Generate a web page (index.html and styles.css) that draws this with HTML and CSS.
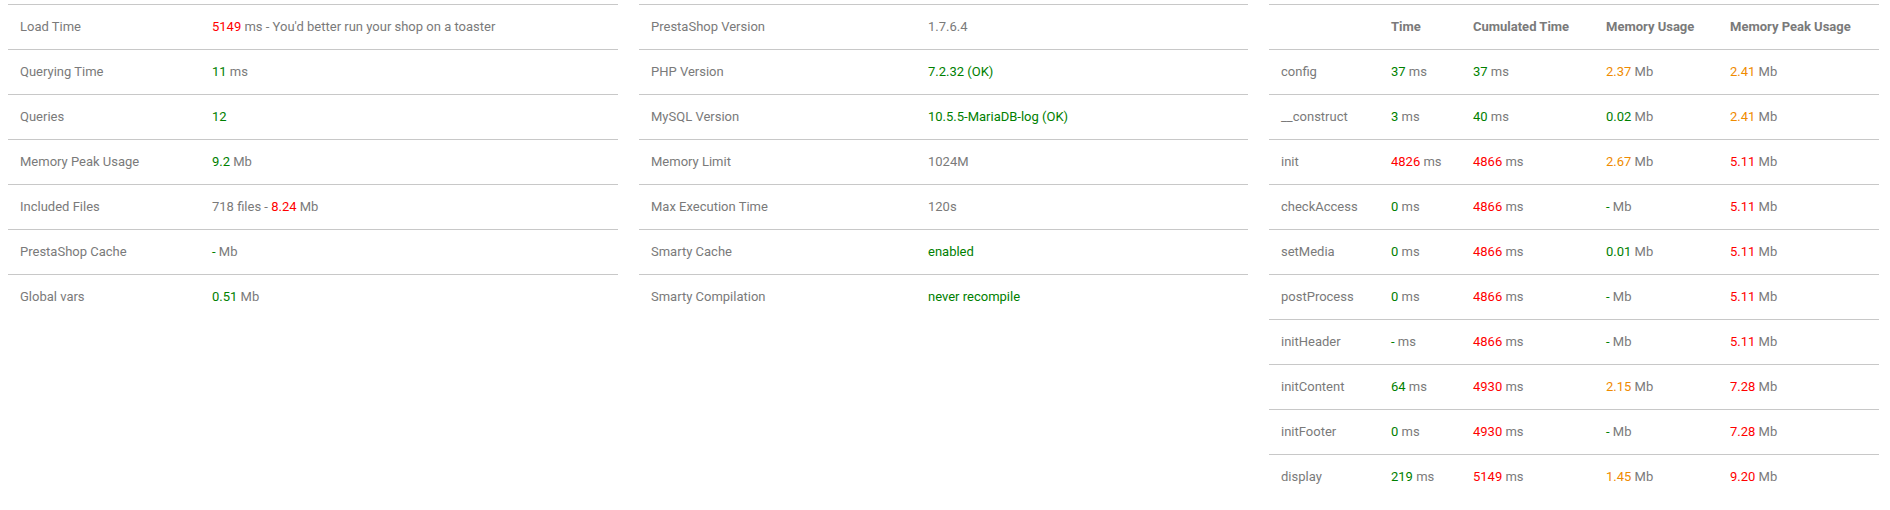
FILE: index.html
```html
<!DOCTYPE html>
<html>
<head>
<meta charset="utf-8">
<link rel="stylesheet" href="styles.css">
</head>
<body>
<div class="profiling">
  <table class="ptable t1">
    <colgroup><col class="c1a"><col></colgroup>
    <tbody>
      <tr><td>Load Time</td><td><span class="bad">5149</span> ms - You'd better run your shop on a toaster</td></tr>
      <tr><td>Querying Time</td><td><span class="ok">11</span> ms</td></tr>
      <tr><td>Queries</td><td><span class="ok">12</span></td></tr>
      <tr><td>Memory Peak Usage</td><td><span class="ok">9.2</span> Mb</td></tr>
      <tr><td>Included Files</td><td>718 files - <span class="bad">8.24</span> Mb</td></tr>
      <tr><td>PrestaShop Cache</td><td><span class="ok">-</span> Mb</td></tr>
      <tr><td>Global vars</td><td><span class="ok">0.51</span> Mb</td></tr>
    </tbody>
  </table>
  <table class="ptable t2">
    <colgroup><col class="c2a"><col></colgroup>
    <tbody>
      <tr><td>PrestaShop Version</td><td>1.7.6.4</td></tr>
      <tr><td>PHP Version</td><td><span class="ok">7.2.32 (OK)</span></td></tr>
      <tr><td>MySQL Version</td><td><span class="ok">10.5.5-MariaDB-log (OK)</span></td></tr>
      <tr><td>Memory Limit</td><td>1024M</td></tr>
      <tr><td>Max Execution Time</td><td>120s</td></tr>
      <tr><td>Smarty Cache</td><td><span class="ok">enabled</span></td></tr>
      <tr><td>Smarty Compilation</td><td><span class="ok">never recompile</span></td></tr>
    </tbody>
  </table>
  <table class="ptable t3">
    <colgroup><col class="c3a"><col class="c3b"><col class="c3c"><col class="c3d"><col></colgroup>
    <thead>
      <tr><th></th><th>Time</th><th>Cumulated Time</th><th>Memory Usage</th><th>Memory Peak Usage</th></tr>
    </thead>
    <tbody>
      <tr><td>config</td><td><span class="ok">37</span> ms</td><td><span class="ok">37</span> ms</td><td><span class="warn">2.37</span> Mb</td><td><span class="warn">2.41</span> Mb</td></tr>
      <tr><td>__construct</td><td><span class="ok">3</span> ms</td><td><span class="ok">40</span> ms</td><td><span class="ok">0.02</span> Mb</td><td><span class="warn">2.41</span> Mb</td></tr>
      <tr><td>init</td><td><span class="bad">4826</span> ms</td><td><span class="bad">4866</span> ms</td><td><span class="warn">2.67</span> Mb</td><td><span class="bad">5.11</span> Mb</td></tr>
      <tr><td>checkAccess</td><td><span class="ok">0</span> ms</td><td><span class="bad">4866</span> ms</td><td><span class="ok">-</span> Mb</td><td><span class="bad">5.11</span> Mb</td></tr>
      <tr><td>setMedia</td><td><span class="ok">0</span> ms</td><td><span class="bad">4866</span> ms</td><td><span class="ok">0.01</span> Mb</td><td><span class="bad">5.11</span> Mb</td></tr>
      <tr><td>postProcess</td><td><span class="ok">0</span> ms</td><td><span class="bad">4866</span> ms</td><td><span class="ok">-</span> Mb</td><td><span class="bad">5.11</span> Mb</td></tr>
      <tr><td>initHeader</td><td><span class="ok">-</span> ms</td><td><span class="bad">4866</span> ms</td><td><span class="ok">-</span> Mb</td><td><span class="bad">5.11</span> Mb</td></tr>
      <tr><td>initContent</td><td><span class="ok">64</span> ms</td><td><span class="bad">4930</span> ms</td><td><span class="warn">2.15</span> Mb</td><td><span class="bad">7.28</span> Mb</td></tr>
      <tr><td>initFooter</td><td><span class="ok">0</span> ms</td><td><span class="bad">4930</span> ms</td><td><span class="ok">-</span> Mb</td><td><span class="bad">7.28</span> Mb</td></tr>
      <tr><td>display</td><td><span class="ok">219</span> ms</td><td><span class="bad">5149</span> ms</td><td><span class="warn">1.45</span> Mb</td><td><span class="bad">9.20</span> Mb</td></tr>
    </tbody>
  </table>
</div>
</body>
</html>
```
FILE: styles.css
```css
html, body {
  margin: 0;
  padding: 0;
  background: #ffffff;
}
body {
  font-family: Roboto, "Liberation Sans", sans-serif;
  font-size: 13px;
  color: #7a7a7a;
}
.profiling {
  display: grid;
  grid-template-columns: 610px 609px 610px;
  column-gap: 21px;
  padding: 4px 10px 0 8px;
  align-items: start;
}
.ptable {
  width: 100%;
  border-collapse: collapse;
  table-layout: fixed;
}
.ptable td, .ptable th {
  border-top: 1px solid #c8c8c8;
  padding: 12px 12px;
  line-height: 20px;
  height: 44px;
  box-sizing: border-box;
  text-align: left;
  white-space: nowrap;
  vertical-align: middle;
}
.ptable th {
  font-weight: 700;
}
.c1a { width: 192px; }
.c2a { width: 277px; }
.c3a { width: 110px; }
.c3b { width: 82px; }
.c3c { width: 133px; }
.c3d { width: 124px; }
.ok { color: #008000; }
.bad { color: #ff0000; }
.warn { color: #ef8b00; }
```
